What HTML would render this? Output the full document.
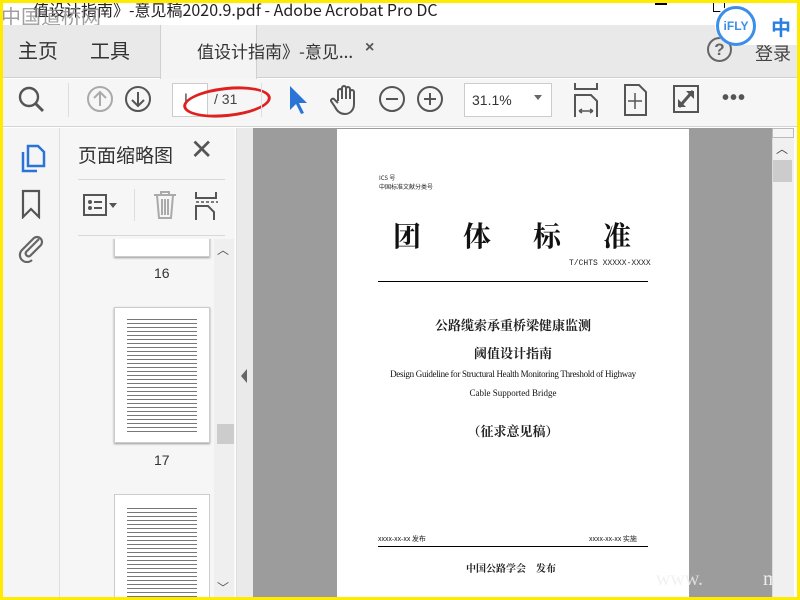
<!DOCTYPE html>
<html><head><meta charset="utf-8"><style>
*{margin:0;padding:0;box-sizing:border-box}
body{width:800px;height:600px;overflow:hidden;background:#ffeb00;font-family:"Liberation Sans","Noto Sans CJK SC",sans-serif;position:relative}
.a{position:absolute}
.cj{font-family:"Noto Sans CJK SC",sans-serif}
.sf{font-family:"Noto Serif CJK SC","Liberation Serif",serif}
</style></head><body>
<div class="a" style="left:3px;top:3px;width:794px;height:594px;background:#fff;overflow:hidden">
 <!-- title -->
 <div class="a cj" style="left:30px;top:-6px;font-size:16px;color:#222;white-space:nowrap">值设计指南》-意见稿2020.9.pdf - Adobe Acrobat Pro DC</div>
 <div class="a cj" style="left:-2px;top:-2px;font-size:20px;color:#888;opacity:.8">中国道桥网</div>
 <div class="a" style="left:652px;top:0;width:12px;height:2px;background:#000"></div>
 <div class="a" style="left:710px;top:0;width:12px;height:9px;border:1px solid #000;border-top:none"></div>
 <!-- tab row -->
 <div class="a" style="left:0;top:22px;width:794px;height:53px;background:#e9e9e9;border-bottom:1px solid #cfcfcf"></div>
 <div class="a cj" style="left:15px;top:32px;font-size:20px;color:#333">主页</div>
 <div class="a cj" style="left:87px;top:32px;font-size:20px;color:#333">工具</div>
 <div class="a" style="left:157px;top:22px;width:97px;height:54px;background:#f4f4f4;border-left:1px solid #d0d0d0;border-right:1px solid #d0d0d0"></div>
 <div class="a cj" style="left:194px;top:35px;font-size:17px;color:#333;white-space:nowrap">值设计指南》-意见...</div>
 <div class="a" style="left:362px;top:36px;font-size:16px;color:#555;font-weight:bold">×</div>
 <div class="a" style="left:704px;top:34px;width:25px;height:25px;border:2px solid #666;border-radius:50%;text-align:center;font-size:17px;font-weight:bold;line-height:21px;color:#666">?</div>
 <div class="a cj" style="left:752px;top:37px;font-size:18px;color:#444">登录</div>
 <div class="a" style="left:712px;top:2px;width:82px;height:40px;background:#fff;border-radius:20px 0 0 20px"></div>
 <div class="a" style="left:713px;top:3px;width:40px;height:40px;border:3px solid #3a8fe8;border-radius:50%;background:#fff;text-align:center;line-height:34px;font-size:12px;font-weight:bold;color:#3a8fe8">iFLY</div>
 <div class="a cj" style="left:768px;top:9px;font-size:20px;font-weight:bold;color:#2a7fe0">中</div>
 <!-- toolbar -->
 <div class="a" style="left:0;top:76px;width:794px;height:48px;background:#f6f6f6;border-bottom:1px solid #d5d5d5"></div>
 <svg class="a" style="left:14px;top:82px" width="30" height="30"><circle cx="12" cy="12" r="9" fill="none" stroke="#555" stroke-width="2.4"/><path d="M18 18l8 8" stroke="#555" stroke-width="3"/></svg>
 <div class="a" style="left:65px;top:80px;width:1px;height:34px;background:#ddd"></div>
 <svg class="a" style="left:84px;top:81px" width="80" height="30"><circle cx="13" cy="15" r="12" fill="none" stroke="#aaa" stroke-width="2"/><path d="M13 22V8M7 14l6-6 6 6" fill="none" stroke="#aaa" stroke-width="2"/><circle cx="51" cy="15" r="12" fill="none" stroke="#555" stroke-width="2"/><path d="M51 8v14M45 16l6 6 6-6" fill="none" stroke="#555" stroke-width="2"/></svg>
 <div class="a" style="left:169px;top:80px;width:36px;height:34px;background:#fff;border:1px solid #ccc"></div>
 <div class="a" style="left:181px;top:87px;font-size:14px;color:#444">I</div>
 <div class="a" style="left:211px;top:88px;font-size:14px;color:#444">/ 31</div>
 <div class="a" style="left:180px;top:84px;width:88px;height:30px;border:3px solid #e02020;border-radius:50%;transform:rotate(-6deg)"></div>
 <div class="a" style="left:258px;top:80px;width:1px;height:34px;background:#ddd"></div>
 <svg class="a" style="left:282px;top:80px" width="30" height="34"><path d="M5 3v24l6-6 5 10 3-1-5-10h8z" fill="#2a74d8"/></svg>
 <svg class="a" style="left:326px;top:80px" width="34" height="34"><path d="M9 18V8a2 2 0 014 0v8V5a2 2 0 014 0v11V6a2 2 0 014 0v10V9a2 2 0 014 0v12c0 6-4 10-9 10s-8-3-10-7l-4-6a2 2 0 013-2l4 4" fill="none" stroke="#555" stroke-width="2"/></svg>
 <svg class="a" style="left:375px;top:81px" width="70" height="30"><circle cx="14" cy="15" r="12" fill="none" stroke="#555" stroke-width="2"/><path d="M8 15h12" stroke="#555" stroke-width="2"/><circle cx="52" cy="15" r="12" fill="none" stroke="#555" stroke-width="2"/><path d="M46 15h12M52 9v12" stroke="#555" stroke-width="2"/></svg>
 <div class="a" style="left:461px;top:80px;width:88px;height:34px;background:#fff;border:1px solid #ccc"></div>
 <div class="a" style="left:469px;top:89px;font-size:14px;color:#333">31.1%</div>
 <div class="a" style="left:531px;top:92px;border:4px solid transparent;border-top:5px solid #666"></div>
 <svg class="a" style="left:568px;top:78px" width="32" height="38"><path d="M4 2v6h22V2M4 36V14h16l6 6v16" fill="none" stroke="#555" stroke-width="2"/><path d="M8 30h14M8 30l3-2M8 30l3 2M22 30l-3-2M22 30l-3 2" stroke="#555" stroke-width="1.5"/></svg>
 <svg class="a" style="left:618px;top:80px" width="30" height="34"><path d="M4 2h14l7 7v23H4z" fill="none" stroke="#555" stroke-width="2"/><path d="M14 10v16M7 18h14" stroke="#555" stroke-width="1.5"/></svg>
 <svg class="a" style="left:668px;top:80px" width="32" height="34"><rect x="3" y="3" width="24" height="26" fill="none" stroke="#555" stroke-width="2"/><path d="M8 24l14-16" stroke="#555" stroke-width="3"/><path d="M15 8h8v8M7 16v8h8" fill="#555"/></svg>
 <div class="a" style="left:719px;top:84px;font-size:20px;color:#555;letter-spacing:1px;font-weight:bold">•••</div>
 <!-- left icon column -->
 <div class="a" style="left:0;top:125px;width:57px;height:469px;background:#f5f5f5;border-right:1px solid #ddd"></div>
 <svg class="a" style="left:16px;top:140px" width="28" height="32"><path d="M9 3h10l6 6v14H9z" fill="none" stroke="#2a74d8" stroke-width="2.5"/><path d="M4 9v19h14" fill="none" stroke="#2a74d8" stroke-width="2.5"/></svg>
 <svg class="a" style="left:17px;top:186px" width="24" height="30"><path d="M3 2h16v26l-8-8-8 8z" fill="none" stroke="#555" stroke-width="2.2"/></svg>
 <svg class="a" style="left:14px;top:230px" width="30" height="30"><path d="M22 6L9 19a3 3 0 004 4L24 12a5 5 0 00-7-7L5 17a7 7 0 0010 10" fill="none" stroke="#666" stroke-width="2.2"/></svg>
 <!-- thumbnails panel -->
 <div class="a" style="left:57px;top:125px;width:175px;height:469px;background:#f6f6f6"></div>
 <div class="a cj" style="left:75px;top:138px;font-size:19px;color:#333">页面缩略图</div>
 <div class="a" style="left:187px;top:130px;font-size:28px;color:#555;line-height:34px">✕</div>
 <div class="a" style="left:75px;top:176px;width:147px;height:1px;background:#d8d8d8"></div>
 <div class="a" style="left:75px;top:232px;width:147px;height:1px;background:#d8d8d8"></div>
 <svg class="a" style="left:78px;top:188px" width="40" height="30"><rect x="3" y="4" width="22" height="20" fill="none" stroke="#555" stroke-width="2"/><circle cx="9" cy="11" r="2" fill="#555"/><circle cx="9" cy="17" r="2" fill="#555"/><path d="M13 11h8M13 17h8" stroke="#555" stroke-width="2"/><path d="M28 12h8l-4 5z" fill="#555"/></svg>
 <div class="a" style="left:131px;top:186px;width:1px;height:32px;background:#ddd"></div>
 <svg class="a" style="left:148px;top:186px" width="30" height="32"><path d="M3 6h22M10 6V3h8v3M6 6l2 23h12l2-23M11 10v16M14 10v16M17 10v16" fill="none" stroke="#aaa" stroke-width="2"/></svg>
 <svg class="a" style="left:190px;top:187px" width="30" height="32"><path d="M3 2v6h20V2M3 30V16h12l6 6v8" fill="none" stroke="#555" stroke-width="2"/><path d="M3 12h22" stroke="#555" stroke-width="1.5" stroke-dasharray="3 2"/></svg>
 <div class="a" style="left:57px;top:236px;width:175px;height:358px;overflow:hidden">
  <div class="a" style="left:54px;top:-10px;width:96px;height:28px;background:#fff;border:1px solid #ccc;box-shadow:0 1px 2px #999"></div>
  <div class="a" style="left:94px;top:26px;font-size:14px;color:#333">16</div>
  <div class="a" style="left:54px;top:68px;width:96px;height:136px;background:#fff;border:1px solid #ccc;box-shadow:0 1px 2px #999">
   <div style="margin:8px 12px;height:118px;background:repeating-linear-gradient(#fff 0 3px,#777 3px 4px)"></div>
  </div>
  <div class="a" style="left:94px;top:213px;font-size:14px;color:#333">17</div>
  <div class="a" style="left:54px;top:255px;width:96px;height:120px;background:#fff;border:1px solid #ccc">
   <div style="margin:10px 12px;height:110px;background:repeating-linear-gradient(#fff 0 3px,#777 3px 4px)"></div>
  </div>
  <div class="a" style="left:154px;top:0;width:20px;height:358px;background:#efefef"></div>
  <div class="a" style="left:157px;top:185px;width:17px;height:20px;background:#ccc"></div>
  <div class="a" style="left:157px;top:2px;font-size:12px;color:#555">︿</div>
  <div class="a" style="left:157px;top:340px;font-size:12px;color:#555">﹀</div>
 </div>
 <!-- collapse bar -->
 <div class="a" style="left:233px;top:125px;width:17px;height:469px;background:#eaeaea;border-left:1px solid #ddd"></div>
 <div class="a" style="left:238px;top:366px;border:5px solid transparent;border-right:6px solid #666;border-left:none;width:0;height:0;border-top-width:7px;border-bottom-width:7px"></div>
 <!-- doc area -->
 <div class="a" style="left:250px;top:125px;width:519px;height:469px;background:#9c9c9c"></div>
 <div class="a" style="left:334px;top:126px;width:352px;height:468px;background:#fff"></div>
 <div class="a cj" style="left:376px;top:170px;font-size:6px;line-height:9px;color:#222">ICS 号<br>中国标准文献分类号</div>
 <div class="a sf" style="left:390px;top:212px;font-size:28px;font-weight:bold;color:#111;letter-spacing:42px;white-space:nowrap">团体标准</div>
 <div class="a" style="left:566px;top:256px;font-size:8px;font-family:'Liberation Mono',monospace;color:#222">T/CHTS XXXXX-XXXX</div>
 <div class="a" style="left:375px;top:278px;width:270px;height:1px;background:#000"></div>
 <div class="a sf" style="left:334px;top:312px;width:352px;text-align:center;font-size:13px;font-weight:bold;color:#222">公路缆索承重桥梁健康监测</div>
 <div class="a sf" style="left:334px;top:340px;width:352px;text-align:center;font-size:13px;font-weight:bold;color:#222">阈值设计指南</div>
 <div class="a" style="left:334px;top:366px;width:352px;text-align:center;font-size:9px;font-family:'Liberation Serif',serif;color:#111;letter-spacing:-.3px">Design Guideline for Structural Health Monitoring Threshold of Highway</div>
 <div class="a" style="left:334px;top:385px;width:352px;text-align:center;font-size:9px;font-family:'Liberation Serif',serif;color:#111">Cable Supported Bridge</div>
 <div class="a sf" style="left:334px;top:418px;width:352px;text-align:center;font-size:13px;font-weight:bold;color:#222">（征求意见稿）</div>
 <div class="a cj" style="left:375px;top:531px;font-size:7px;color:#222">xxxx-xx-xx 发布</div>
 <div class="a cj" style="left:586px;top:531px;font-size:7px;color:#222">xxxx-xx-xx 实施</div>
 <div class="a" style="left:375px;top:543px;width:270px;height:1px;background:#000"></div>
 <div class="a sf" style="left:463px;top:557px;font-size:10px;font-weight:bold;color:#222;white-space:nowrap">中国公路学会　发布</div>
 <div class="a" style="left:653px;top:565px;font-size:20px;font-family:'Liberation Serif',serif;color:#eee;opacity:.8">www.</div>
 <div class="a" style="left:760px;top:565px;font-size:20px;font-family:'Liberation Serif',serif;color:#eee">m</div>
 <!-- right scrollbar -->
 <div class="a" style="left:769px;top:125px;width:22px;height:469px;background:#f0f0f0;border-left:1px solid #ddd"></div>
 <div class="a" style="left:769px;top:125px;width:22px;height:10px;border:1px solid #bbb;background:#f5f5f5"></div>
 <div class="a" style="left:773px;top:137px;font-size:12px;color:#444">︿</div>
 <div class="a" style="left:770px;top:157px;width:19px;height:22px;background:#ccc"></div>
</div>
</body></html>
